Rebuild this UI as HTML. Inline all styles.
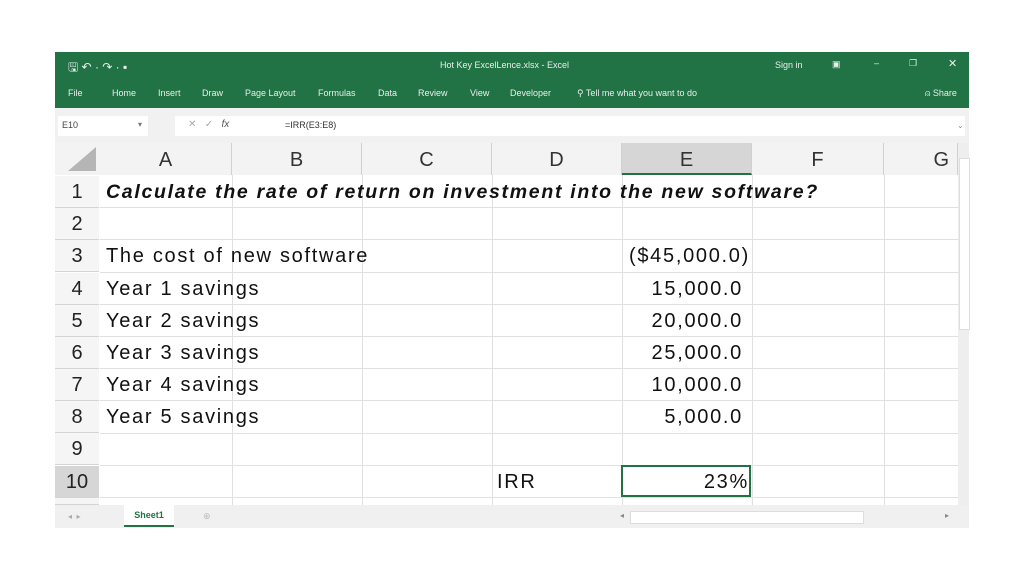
<!DOCTYPE html>
<html><head><meta charset="utf-8"><style>
body{margin:0;width:1024px;height:576px;background:#fff;position:relative;overflow:hidden;font-family:"Liberation Sans",sans-serif}
.a{position:absolute}
.g{background:#217346;color:#fff}
.t{font-size:9px;color:#e8f0ea;position:absolute;white-space:nowrap}
.ch{position:absolute;top:143px;height:32px;font-size:20px;color:#333;text-align:center;line-height:34px;border-right:1px solid #d0d0d0;box-sizing:border-box;background:#f3f3f3}
.rh{position:absolute;left:55px;width:44px;height:32px;font-size:20px;color:#222;text-align:center;line-height:33px;background:#f5f5f5;border-bottom:1px solid #d4d4d4;box-sizing:border-box}
.c{position:absolute;font-size:20px;color:#111;white-space:nowrap;line-height:32px;letter-spacing:1.7px}
</style></head><body>
<div class="a g" style="left:55px;top:52px;width:914px;height:56px"></div>
<span class="t" style="left:68px;top:58px;font-size:12px">🖫 ↶ · ↷ · ▪</span>
<span class="t" style="left:440px;top:60px">Hot Key ExcelLence.xlsx - Excel</span>
<span class="t" style="left:775px;top:60px">Sign in</span>
<span class="t" style="left:832px;top:59px">▣</span>
<span class="t" style="left:874px;top:58px">–</span>
<span class="t" style="left:909px;top:58px">❐</span>
<span class="t" style="left:948px;top:57px;font-size:11px">✕</span>
<span class="t" style="left:68px;top:88px">File</span>
<span class="t" style="left:112px;top:88px">Home</span>
<span class="t" style="left:158px;top:88px">Insert</span>
<span class="t" style="left:202px;top:88px">Draw</span>
<span class="t" style="left:245px;top:88px">Page Layout</span>
<span class="t" style="left:318px;top:88px">Formulas</span>
<span class="t" style="left:378px;top:88px">Data</span>
<span class="t" style="left:418px;top:88px">Review</span>
<span class="t" style="left:470px;top:88px">View</span>
<span class="t" style="left:510px;top:88px">Developer</span>
<span class="t" style="left:577px;top:88px">⚲ Tell me what you want to do</span>
<span class="t" style="left:925px;top:88px">⍝ Share</span>
<div class="a" style="left:55px;top:108px;width:914px;height:35px;background:#f1f1f1"></div>
<div class="a" style="left:58px;top:116px;width:90px;height:20px;background:#fff"></div>
<span class="a" style="left:62px;top:120px;font-size:9px;color:#444">E10</span>
<span class="a" style="left:138px;top:120px;font-size:8px;color:#777">▾</span>
<div class="a" style="left:175px;top:116px;width:790px;height:20px;background:#fff"></div>
<span class="a" style="left:188px;top:119px;font-size:10px;color:#aaa">✕ &nbsp; ✓ &nbsp; <i style="color:#555">fx</i></span>
<span class="a" style="left:285px;top:120px;font-size:9px;color:#333">=IRR(E3:E8)</span>
<span class="a" style="left:957px;top:121px;font-size:8px;color:#888">⌄</span>
<div class="a" style="left:55px;top:143px;width:45px;height:32px;background:#f3f3f3"></div>
<div class="a" style="left:68px;top:147px;width:0;height:0;border-left:28px solid transparent;border-bottom:24px solid #b5b5b5"></div>
<div class="ch" style="left:100px;width:132px">A</div>
<div class="ch" style="left:232px;width:130px">B</div>
<div class="ch" style="left:362px;width:130px">C</div>
<div class="ch" style="left:492px;width:130px">D</div>
<div class="ch" style="left:622px;width:130px;background:#d6d6d6;border-bottom:2px solid #217346">E</div>
<div class="ch" style="left:752px;width:132px">F</div>
<div class="ch" style="left:884px;width:74px;text-align:right;padding-right:8px">G</div>
<div class="a" style="left:958px;top:143px;width:11px;height:362px;background:#eee"></div>
<div class="a" style="left:959px;top:158px;width:9px;height:170px;background:#fff;border:1px solid #ddd"></div>
<svg class="a" style="left:100px;top:175px" width="858" height="330">
<g stroke="#e0e0e0" stroke-width="1">
<line x1="132.5" y1="0" x2="132.5" y2="330"/><line x1="262.5" y1="0" x2="262.5" y2="330"/><line x1="392.5" y1="0" x2="392.5" y2="330"/><line x1="522.5" y1="0" x2="522.5" y2="330"/><line x1="652.5" y1="0" x2="652.5" y2="330"/><line x1="784.5" y1="0" x2="784.5" y2="330"/>
<line x1="0" y1="32.5" x2="858" y2="32.5"/><line x1="0" y1="64.5" x2="858" y2="64.5"/><line x1="0" y1="97.5" x2="858" y2="97.5"/><line x1="0" y1="129.5" x2="858" y2="129.5"/><line x1="0" y1="161.5" x2="858" y2="161.5"/><line x1="0" y1="193.5" x2="858" y2="193.5"/><line x1="0" y1="225.5" x2="858" y2="225.5"/><line x1="0" y1="258.5" x2="858" y2="258.5"/><line x1="0" y1="290.5" x2="858" y2="290.5"/><line x1="0" y1="322.5" x2="858" y2="322.5"/>
</g></svg>
<div class="rh" style="top:176px">1</div><div class="rh" style="top:208px">2</div><div class="rh" style="top:240px">3</div><div class="rh" style="top:273px">4</div><div class="rh" style="top:305px">5</div><div class="rh" style="top:337px">6</div><div class="rh" style="top:369px">7</div><div class="rh" style="top:401px">8</div><div class="rh" style="top:433px">9</div><div class="rh" style="top:466px;background:#d6d6d6">10</div><div class="rh" style="top:498px;height:7px"></div>
<div class="c" style="left:106px;top:176px;font-weight:bold;font-style:italic;font-size:19.5px">Calculate the rate of return on investment into the new software?</div>
<div class="c" style="left:106px;top:240px">The cost of new software</div>
<div class="c" style="left:106px;top:273px">Year 1 savings</div>
<div class="c" style="left:106px;top:305px">Year 2 savings</div>
<div class="c" style="left:106px;top:337px">Year 3 savings</div>
<div class="c" style="left:106px;top:369px">Year 4 savings</div>
<div class="c" style="left:106px;top:401px">Year 5 savings</div>
<div class="c" style="right:274px;top:240px">($45,000.0)</div>
<div class="c" style="right:281px;top:273px">15,000.0</div>
<div class="c" style="right:281px;top:305px">20,000.0</div>
<div class="c" style="right:281px;top:337px">25,000.0</div>
<div class="c" style="right:281px;top:369px">10,000.0</div>
<div class="c" style="right:281px;top:401px">5,000.0</div>
<div class="c" style="left:497px;top:466px">IRR</div>
<div class="a" style="left:621px;top:465px;width:130px;height:32px;border:2px solid #217346;box-sizing:border-box"></div>
<div class="c" style="right:275px;top:466px">23%</div>
<div class="a" style="left:55px;top:505px;width:914px;height:23px;background:#f0f0f0"></div>
<span class="a" style="left:68px;top:512px;font-size:8px;color:#aaa">◂ &nbsp;▸</span>
<div class="a" style="left:124px;top:505px;width:50px;height:20px;background:#fff;border-bottom:2px solid #217346;font-size:9px;color:#217346;font-weight:bold;text-align:center;line-height:20px">Sheet1</div>
<span class="a" style="left:203px;top:511px;font-size:9px;color:#bbb">⊕</span>
<div class="a" style="left:630px;top:511px;width:232px;height:11px;background:#fff;border:1px solid #ddd"></div>
<span class="a" style="left:620px;top:511px;font-size:8px;color:#888">◂</span>
<span class="a" style="left:945px;top:511px;font-size:8px;color:#888">▸</span>
</body></html>
